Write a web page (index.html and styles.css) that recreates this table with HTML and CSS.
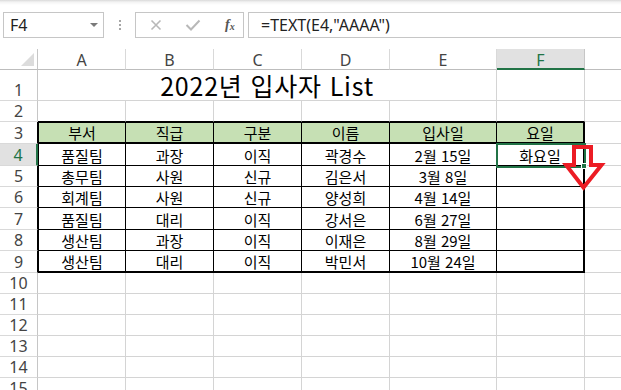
FILE: index.html
```html
<!DOCTYPE html>
<html lang="ko">
<head>
<meta charset="utf-8">
<title>입사자 List</title>
<link rel="stylesheet" href="styles.css">
</head>
<body>
<div class="app">
  <div class="fbar">
    <div class="namebox">
      <span class="ref">F4</span>
      <span class="caret"></span>
    </div>
    <div class="grip"><i></i><i></i><i></i></div>
    <div class="fbtns">
      <svg class="ico" width="12" height="12" viewBox="0 0 12 12"><path d="M1.5 1.5 L10.5 10.5 M10.5 1.5 L1.5 10.5" stroke="#b8b8b8" stroke-width="1.6" fill="none"/></svg>
      <svg class="ico" width="16" height="12" viewBox="0 0 16 12"><path d="M1.5 6 L6 10.5 L14.5 1.5" stroke="#b8b8b8" stroke-width="2" fill="none"/></svg>
      <span class="fx">f<sub>x</sub></span>
    </div>
    <div class="formula">=TEXT(E4,"AAAA")</div>
  </div>

  <div class="sheet">
    <!-- column headers -->
    <div class="corner"><span class="tri"></span></div>
    <div class="ch">A</div><div class="ch">B</div><div class="ch">C</div><div class="ch">D</div><div class="ch">E</div><div class="ch sel">F</div><div class="ch last"></div>

    <!-- 1 -->
    <div class="rh">1</div>
    <div class="c title">2022년 입사자 List</div>
    <div class="c"></div><div class="c g"></div>

    <!-- 2 -->
    <div class="rh">2</div>
    <div class="c top"></div><div class="c top"></div><div class="c top"></div><div class="c top"></div><div class="c top"></div><div class="c top"></div><div class="c g"></div>

    <!-- 3 -->
    <div class="rh in">3</div>
    <div class="c t h first">부서</div><div class="c t h">직급</div><div class="c t h">구분</div><div class="c t h">이름</div><div class="c t h">입사일</div><div class="c t h end">요일</div><div class="c g"></div>

    <!-- 4 -->
    <div class="rh in on">4</div>
    <div class="c t first">품질팀</div><div class="c t">과장</div><div class="c t">이직</div><div class="c t">곽경수</div><div class="c t">2월 15일</div>
    <div class="c t end active">화요일<span class="cursor"></span><span class="handle"></span></div><div class="c g"></div>

    <!-- 5 -->
    <div class="rh in">5</div>
    <div class="c t first">총무팀</div><div class="c t">사원</div><div class="c t">신규</div><div class="c t">김은서</div><div class="c t">3월 8일</div><div class="c t end"></div><div class="c g"></div>

    <!-- 6 -->
    <div class="rh in">6</div>
    <div class="c t first">회계팀</div><div class="c t">사원</div><div class="c t">신규</div><div class="c t">양성희</div><div class="c t">4월 14일</div><div class="c t end"></div><div class="c g"></div>

    <!-- 7 -->
    <div class="rh in">7</div>
    <div class="c t first">품질팀</div><div class="c t">대리</div><div class="c t">이직</div><div class="c t">강서은</div><div class="c t">6월 27일</div><div class="c t end"></div><div class="c g"></div>

    <!-- 8 -->
    <div class="rh in">8</div>
    <div class="c t first">생산팀</div><div class="c t">과장</div><div class="c t">이직</div><div class="c t">이재은</div><div class="c t">8월 29일</div><div class="c t end"></div><div class="c g"></div>

    <!-- 9 -->
    <div class="rh in">9</div>
    <div class="c t b first">생산팀</div><div class="c t b">대리</div><div class="c t b">이직</div><div class="c t b">박민서</div><div class="c t b">10월 24일</div><div class="c t b end"></div><div class="c g"></div>

    <div class="rh">10</div><div class="c"></div><div class="c"></div><div class="c"></div><div class="c"></div><div class="c"></div><div class="c"></div><div class="c g"></div>
    <div class="rh">11</div><div class="c"></div><div class="c"></div><div class="c"></div><div class="c"></div><div class="c"></div><div class="c"></div><div class="c g"></div>
    <div class="rh">12</div><div class="c"></div><div class="c"></div><div class="c"></div><div class="c"></div><div class="c"></div><div class="c"></div><div class="c g"></div>
    <div class="rh">13</div><div class="c"></div><div class="c"></div><div class="c"></div><div class="c"></div><div class="c"></div><div class="c"></div><div class="c g"></div>
    <div class="rh">14</div><div class="c"></div><div class="c"></div><div class="c"></div><div class="c"></div><div class="c"></div><div class="c"></div><div class="c g"></div>
    <div class="rh">15</div><div class="c"></div><div class="c"></div><div class="c"></div><div class="c"></div><div class="c"></div><div class="c"></div><div class="c g"></div>

    <!-- fill-down hint over column F -->
    <svg class="arrow" width="44" height="50" viewBox="0 0 44 50">
      <path d="M12 3 H29 V21 H39.5 L21.5 43.5 L4 21 H12 Z" fill="none" stroke="#ec1c24" stroke-width="4" stroke-linejoin="miter"/>
    </svg>
  </div>
</div>
</body>
</html>
```

FILE: styles.css
```css
* { box-sizing: border-box; }

html, body {
  margin: 0;
  padding: 0;
  background: #fff;
  overflow: hidden;
}

.app {
  width: 621px;
  height: 390px;
  overflow: hidden;
  font-family: "Noto Sans CJK KR", "Noto Sans", sans-serif;
  color: #000;
}

/* ---------- formula bar ---------- */
.fbar {
  height: 49px;
  display: flex;
  align-items: flex-start;
  padding: 12px 0 0 3px;
  background: linear-gradient(#d9d9d9 0, #f3f3f3 2px, #fff 5px);
  white-space: nowrap;
}

.fbar > * { flex-shrink: 0; }

.namebox {
  width: 101px;
  height: 26px;
  border: 1px solid #c6c6c6;
  display: flex;
  align-items: center;
  justify-content: space-between;
  padding: 0 5px 0 6px;
  background: #fff;
}

.ref {
  font-family: "Noto Sans", sans-serif;
  font-size: 16px;
  line-height: 20px;
  color: #222;
}

.caret {
  width: 0;
  height: 0;
  border-left: 4px solid transparent;
  border-right: 4px solid transparent;
  border-top: 4px solid #7a7a7a;
}

.grip {
  width: 31px;
  height: 26px;
  display: flex;
  flex-direction: column;
  align-items: center;
  justify-content: center;
  gap: 2px;
}

.grip i {
  width: 2px;
  height: 2px;
  background: #a6a6a6;
}

.fbtns {
  width: 109px;
  height: 26px;
  border: 1px solid #c6c6c6;
  display: flex;
  align-items: center;
  padding-left: 14px;
  gap: 21px;
  background: #fff;
}

.fbtns .ico:nth-child(2) { margin-left: 2px; }

.fx {
  font-family: "Liberation Serif", serif;
  font-style: italic;
  font-weight: bold;
  font-size: 14px;
  color: #555;
  margin-left: 3px;
  line-height: 1;
}

.fx sub {
  font-size: 10px;
  vertical-align: -1px;
}

.formula {
  margin-left: 4px;
  width: 400px;
  height: 26px;
  border: 1px solid #c6c6c6;
  border-right: none;
  padding-left: 12px;
  font-family: "Noto Sans", sans-serif;
  font-size: 16px;
  line-height: 20px;
  color: #222;
  display: flex;
  align-items: center;
}

/* ---------- sheet grid ---------- */
.sheet {
  position: relative;
  display: grid;
  grid-template-columns: 38px 88px 88px 88px 88px 107px 88px 1fr;
  grid-template-rows: 21px 31px 21px 22px 22px 21px 21px 22px 21px 22px 21px 21px 21px 21px 21px 21px;
}

.corner {
  border-right: 1px solid #c6c6c6;
  border-bottom: 1px solid #bdbdbd;
  position: relative;
}

.tri {
  position: absolute;
  right: 3px;
  bottom: 3px;
  width: 0;
  height: 0;
  border-left: 13px solid transparent;
  border-bottom: 13px solid #dcdcdc;
}

.ch {
  border-right: 1px solid #d9d9d9;
  border-bottom: 1px solid #bdbdbd;
  display: flex;
  align-items: center;
  justify-content: center;
  font-family: "Noto Sans", sans-serif;
  font-size: 16px;
  line-height: 18px;
  padding-top: 1px;
  color: #444;
}

.ch.last { border-right: none; }

.ch.sel {
  background: #e1e1e1;
  color: #217346;
  border-bottom: 2px solid #217346;
  border-right-color: #c6c6c6;
  padding-top: 2px;
}

.rh {
  border-right: 1px solid #c6c6c6;
  border-bottom: 1px solid #d9d9d9;
  display: flex;
  align-items: flex-end;
  justify-content: center;
  font-family: "Noto Sans", sans-serif;
  font-size: 16px;
  line-height: 18px;
  padding-bottom: 1px;
  color: #444;
  overflow: hidden;
}

.rh.in { border-right-color: #000; }

.rh.on {
  background: #e1e1e1;
  color: #217346;
  border-right: 2px solid #217346;
}

/* cells */
.c {
  border-right: 1px solid #d4d4d4;
  border-bottom: 1px solid #d4d4d4;
  display: flex;
  align-items: flex-end;
  justify-content: center;
  font-size: 15px;
  line-height: 19px;
  white-space: nowrap;
}

.c.g { border-right: none; }

.title {
  grid-column: 2 / 7;
  font-size: 25px;
  line-height: 28px;
  letter-spacing: 0.8px;
  padding-bottom: 1px;
}

.c.top { border-bottom-color: #000; }

.c.t {
  border-right-color: #000;
  border-bottom-color: #000;
}

.c.first { border-left: 1px solid #000; }
.c.end { border-right: 2px solid #000; }

.c.h {
  background: #c6e0b4;
  border-top: 1px solid #000;
  border-bottom: 2px solid #000;
}

.c.b { border-bottom: 2px solid #000; }

/* active cell */
.active { position: relative; }

.cursor {
  position: absolute;
  left: -1px;
  top: -1px;
  right: -3px;
  bottom: -3px;
  border: 2px solid #217346;
}

.handle {
  position: absolute;
  right: -4px;
  bottom: -4px;
  width: 6px;
  height: 6px;
  background: #217346;
  border: 1px solid #fff;
}

.arrow {
  position: absolute;
  left: 562px;
  top: 95px;
}
```
